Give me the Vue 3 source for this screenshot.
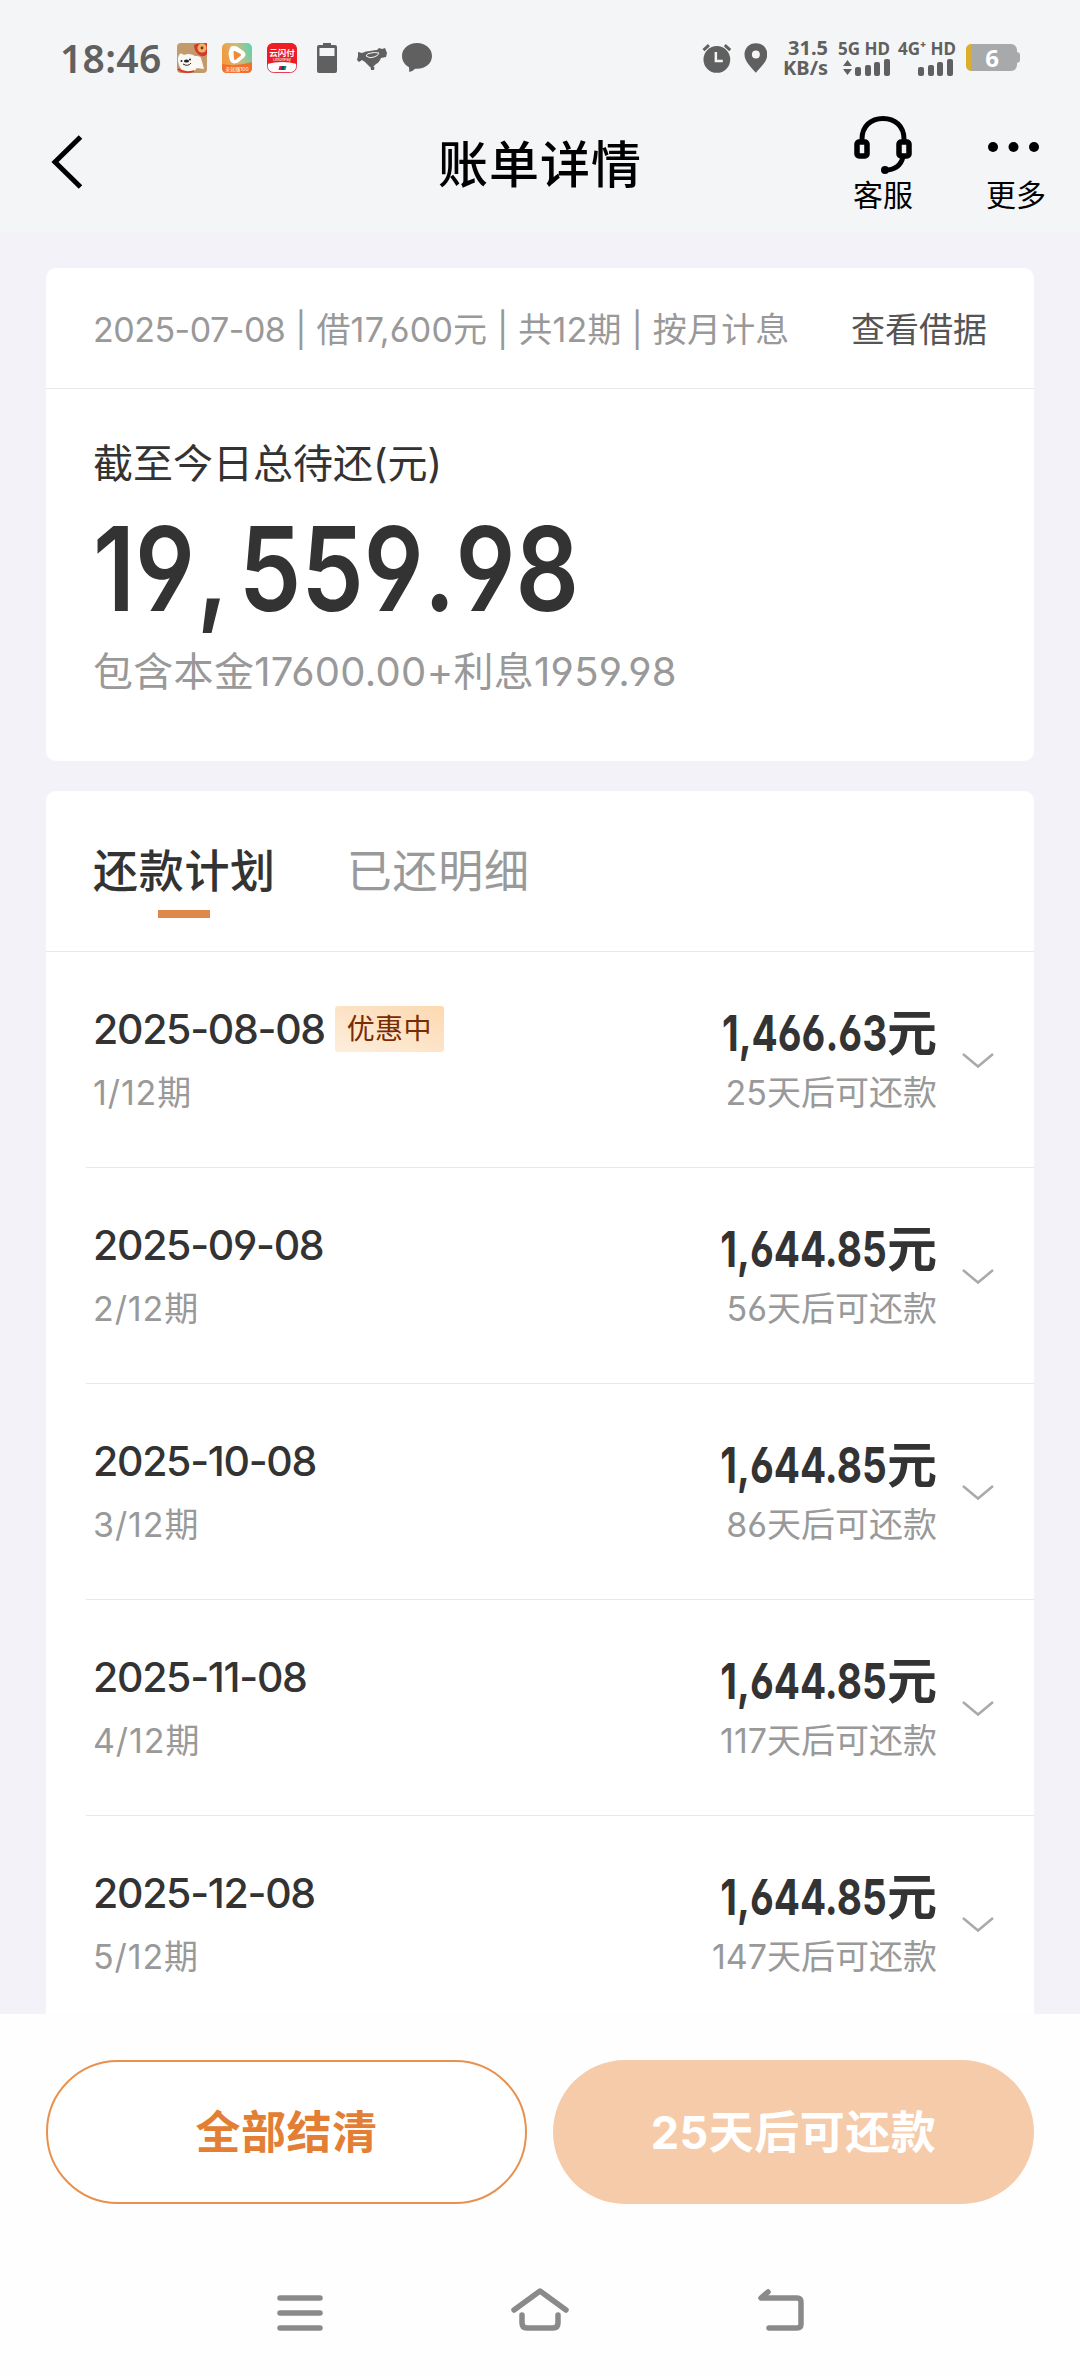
<script setup>
import { ref } from 'vue'

const tabs = ['还款计划', '已还明细']
const activeTab = ref(0)

const plans = [
  { date: '2025-08-08', period: '1/12期', amount: '1,466.63', tip: '25天后可还款', tag: '优惠中' },
  { date: '2025-09-08', period: '2/12期', amount: '1,644.85', tip: '56天后可还款' },
  { date: '2025-10-08', period: '3/12期', amount: '1,644.85', tip: '86天后可还款' },
  { date: '2025-11-08', period: '4/12期', amount: '1,644.85', tip: '117天后可还款' },
  { date: '2025-12-08', period: '5/12期', amount: '1,644.85', tip: '147天后可还款' }
]
</script>

<template>
  <div class="page">
    <header class="top">
      <div class="status-bar">
        <span class="clock">18:46</span>
        <div class="notices">
          <svg width="30" height="30" viewBox="0 0 30 30">
            <rect width="30" height="30" rx="4" fill="#c39a6b" />
            <path d="M17 2q3-2 13-2v11q-3 4-8 1-5-4-5-10z" fill="#d8382c" />
            <circle cx="25" cy="5" r="4.500" fill="#e9b565" />
            <circle cx="25" cy="5" r="1.400" fill="#7c2d17" />
            <path d="M2 12c1-2 3-2 5 0 4-2 8-1 11 1 2 0 5 0 6 2l3 11-7-1c-3 5-13 5-16 1-3-5-4-11-2-14z" fill="#fbf8f3" />
            <path d="M1 26c4 3 10 4 16 2" stroke="#d8382c" stroke-width="1.600" fill="none" />
            <circle cx="4.500" cy="18" r="1" fill="#222" />
            <circle cx="13" cy="16.500" r="1" fill="#222" />
            <ellipse cx="9.500" cy="18" rx="2.600" ry="1.500" fill="#222" />
            <path d="M6 21q5 3 8-1" stroke="#222" fill="none" />
          </svg>
          <svg width="30" height="30" viewBox="0 0 30 30">
            <defs>
              <linearGradient id="play" x1="0" y1="0.300" x2="1" y2="0">
                <stop offset="0" stop-color="#f29a3e" />
                <stop offset="0.450" stop-color="#d5b777" />
                <stop offset="1" stop-color="#4fd6b8" />
              </linearGradient>
            </defs>
            <rect width="30" height="30" rx="5" fill="url(#play)" />
            <path d="M0 21q14 3 30-2v6q0 5-5 5H5q-5 0-5-5z" fill="#f2702e" />
            <path d="M9 3.500q2-1 6 0l7 5q3 3 0 6l-6 5q-6 2.500-8-2-3-9 1-14z" fill="#fff" />
            <path d="M12.500 9l5.500 3-5 4z" fill="#f08a36" stroke="#f08a36" stroke-width="2" stroke-linejoin="round" />
            <text x="15" y="28" text-anchor="middle" class="app-tiny">来就赚100</text>
          </svg>
          <svg width="30" height="30" viewBox="0 0 30 30">
            <rect x="0.500" y="0.500" width="29" height="29" rx="6" fill="#fff" stroke="#e0405a" />
            <path d="M0 7q0-7 7-7h16q7 0 7 7v14q-15-4-30 0z" fill="#ee1c25" />
            <text x="15" y="12.500" text-anchor="middle" class="app-name">云闪付</text>
            <text x="15" y="17.500" text-anchor="middle" class="app-sub">UnionPay</text>
            <path d="M12.500 23h3l-1 4h-3z" fill="#d8222a" />
            <path d="M15 23h3l-1 4h-3z" fill="#17436e" />
            <path d="M17.500 23h2l-1 4h-2z" fill="#0b8a86" />
          </svg>
          <svg width="30" height="30" viewBox="0 0 30 30" fill="#606060">
            <path fill-rule="evenodd" d="M11 0h8v2h4q2 0 2 2v24q0 2-2 2H7q-2 0-2-2V4q0-2 2-2h4zM7.500 5v8h15V5z" />
          </svg>
          <svg width="30" height="30" viewBox="0 0 30 30" fill="#606060">
            <path d="M1 9l4 1q4-2 8-2 5-1 7-1l2-2 3 1 3-1 2 5-1 4-5 1q-2 5-5 6l-3 3h-3l-5-5-3-2-3 2-2-2 1-4z" />
            <path d="M13.500 24h4l-.5 3h-3z" />
            <path d="M9 13q4 3 8 1 4-1 5-4-5-1-8 0-4 0-5 3z" fill="none" stroke="#f4f5f7" stroke-width="1" />
          </svg>
          <svg width="30" height="30" viewBox="0 0 30 30" fill="#606060">
            <path d="M15 0C6.500 0 0 5.600 0 13c0 4.800 2.800 9 7 11.200L7.300 29q3-.6 6-3.300C23 26.500 30 20.600 30 13 30 5.600 23.500 0 15 0z" />
          </svg>
        </div>
        <div class="system">
          <svg width="30" height="30" viewBox="0 0 30 30">
            <circle cx="15" cy="16.500" r="13.500" fill="#606060" />
            <path d="M1.500 7L7 2M28.500 7L23 2" stroke="#606060" stroke-width="3" />
            <path d="M14 9v9h7" stroke="#f4f5f7" stroke-width="2.500" fill="none" />
          </svg>
          <svg class="pin" width="24" height="30" viewBox="0 0 24 30">
            <path fill="#606060" fill-rule="evenodd" d="M12 0C5 0 .5 5 .5 11.500.5 19 8 25 12 30c4-5 11.500-11 11.500-18.500C23.500 5 19 0 12 0zm0 7.500a4 4 0 1 1 0 8 4 4 0 0 1 0-8z" />
          </svg>
          <div class="speed">31.5<br>KB/s</div>
          <div class="signal">
            <span>5G HD</span>
            <svg width="48" height="17" viewBox="0 0 48 17" fill="#606060">
              <path d="M1 7l4.500-6L10 7zM1 10l4.500 6L10 10z" />
              <rect x="13" y="8" width="6" height="9" rx="2" />
              <rect x="23" y="6" width="6" height="11" rx="2" />
              <rect x="32" y="3" width="6" height="14" rx="2" />
              <rect x="42" y="0" width="6" height="17" rx="2" />
            </svg>
          </div>
          <div class="signal second">
            <span>4G⁺ HD</span>
            <svg width="38" height="17" viewBox="0 0 38 17" fill="#606060">
              <rect x="0" y="8" width="6" height="9" rx="2" />
              <rect x="10" y="6" width="6" height="11" rx="2" />
              <rect x="19" y="3" width="6" height="14" rx="2" />
              <rect x="29" y="0" width="6" height="17" rx="2" />
            </svg>
          </div>
          <svg class="battery" width="54" height="28" viewBox="0 0 54 28">
            <rect width="51" height="27" rx="6" fill="#a8a9ab" />
            <path d="M50 8q4 0 4 3v5q0 3-4 3z" fill="#a8a9ab" />
            <path d="M5 0H4.500Q0 1 0 6v15q0 5 4.500 6H5z" fill="#dcae2e" />
            <text x="26" y="22.500" text-anchor="middle" class="battery-num">6</text>
          </svg>
        </div>
      </div>

      <div class="nav-bar">
        <svg class="back" width="34" height="56" viewBox="0 0 34 56">
          <path d="M30.500 3L5 28l25.500 25" fill="none" stroke="#000" stroke-width="5" />
        </svg>
        <h1>账单详情</h1>
        <div class="actions">
          <div class="action">
            <svg width="60" height="60" viewBox="0 0 60 60" fill="none" stroke="#000">
              <path d="M9 25v-2C9 10 18 2.500 30 2.500S51 10 51 23v2" stroke-width="5" />
              <rect x="4" y="26" width="10" height="14" rx="2" stroke-width="5.500" />
              <rect x="46" y="26" width="10" height="14" rx="2" stroke-width="5.500" />
              <path d="M50 41c-2 8-8 13-18 13" stroke-width="5" />
              <circle cx="32" cy="54" r="4" fill="#000" stroke="none" />
            </svg>
            <span>客服</span>
          </div>
          <div class="action">
            <svg width="60" height="60" viewBox="0 0 60 60" fill="#000">
              <circle cx="7" cy="31" r="5" />
              <circle cx="27.500" cy="31" r="5" />
              <circle cx="48" cy="31" r="5" />
            </svg>
            <span>更多</span>
          </div>
        </div>
      </div>
    </header>

    <main class="content">
      <section class="card summary">
        <div class="loan-line">
          <span class="loan-info"><span class="loan-date">2025-07-08</span> | 借17,600元 | 共12期 | 按月计息</span>
          <span class="loan-link">查看借据</span>
        </div>
        <div class="total">
          <div class="total-label">截至今日总待还(元)</div>
          <div class="total-num"><span>19<i>,</i>559.98</span></div>
          <div class="total-desc">包含本金17600.00+利息1959.98</div>
        </div>
      </section>

      <section class="card plan">
        <div class="tabs">
          <div
            v-for="(tab, i) in tabs"
            :key="tab"
            :class="['tab', { active: activeTab === i }]"
            @click="activeTab = i"
          >{{ tab }}</div>
        </div>
        <div v-for="item in plans" :key="item.date" class="row">
          <div class="left">
            <div class="date-line">
              <span class="date">{{ item.date }}</span>
              <span v-if="item.tag" class="tag">{{ item.tag }}</span>
            </div>
            <div class="sub">{{ item.period }}</div>
          </div>
          <div class="right">
            <div class="amount"><span class="num">{{ item.amount }}</span><span>元</span></div>
            <div class="sub tip">{{ item.tip }}</div>
          </div>
          <svg class="arrow" width="32" height="16" viewBox="0 0 32 16">
            <path d="M1 1l15 12.500L31 1" fill="none" stroke="#aaa" stroke-width="2.500" />
          </svg>
        </div>
      </section>
    </main>

    <footer class="footer">
      <div class="buttons">
        <button class="btn outline">全部结清</button>
        <button class="btn solid">25天后可还款</button>
      </div>
      <div class="sys-nav">
        <svg width="60" height="48" viewBox="0 0 60 48" fill="none" stroke="#8a8a8a" stroke-width="5.500" stroke-linecap="round">
          <path d="M10 13h40M10 28h40M10 43h40" />
        </svg>
        <svg width="60" height="48" viewBox="0 0 60 48" fill="none" stroke="#8a8a8a" stroke-width="5.500" stroke-linecap="round" stroke-linejoin="round">
          <path d="M4 25L30 6l26 19" />
          <path d="M12 30v8q0 5 5 5h26q5 0 5-5v-8" />
        </svg>
        <svg width="60" height="48" viewBox="0 0 60 48" fill="none" stroke="#8a8a8a" stroke-width="5.500" stroke-linecap="round" stroke-linejoin="round">
          <path d="M18 7l-7 6h36q4 0 4 4v22q0 4-4 4H19" />
        </svg>
      </div>
    </footer>
  </div>
</template>

<style>
body {
  background: #f3f2f8;
}
</style>

<style scoped>
.page {
  width: 1080px;
  height: 2376px;
  display: flex;
  flex-direction: column;
  overflow: hidden;
  background: #f3f2f8;
  color: #333;
  font-family: Inter, "Noto Sans CJK SC", sans-serif;
  font-feature-settings: "cv03", "cv04", "cv05";
}
.top {
  height: 232px;
  flex: none;
  background: #f4f5f7;
}
.status-bar {
  height: 116px;
  padding: 0 60px;
  display: flex;
  align-items: center;
  color: #606060;
}
.clock {
  width: 117px;
  font: 600 39px/56px "Noto Sans", sans-serif;
  letter-spacing: 0.3px;
}
.notices {
  display: flex;
  gap: 15px;
  flex: 1;
}
.app-tiny {
  font-size: 5px;
  fill: #fff;
}
.app-name {
  font-size: 8.5px;
  font-weight: 700;
  fill: #fff;
}
.app-sub {
  font-size: 4px;
  fill: #fff;
}
.system {
  width: 318px;
  display: flex;
  align-items: center;
}
.pin {
  margin-left: 12px;
}
.speed {
  width: 48px;
  margin-left: 13px;
  margin-right: 1px;
  text-align: right;
  font: 700 20px/20px "Noto Sans", sans-serif;
}
.signal {
  width: 48px;
  margin-left: 13px;
  display: flex;
  flex-direction: column;
  align-items: flex-end;
  gap: 2px;
  font: 700 17px/16px "Noto Sans", sans-serif;
  white-space: nowrap;
}
.signal.second {
  width: 56px;
  margin-left: 10px;
}
.battery {
  margin-left: 10px;
  overflow: visible;
}
.battery-num {
  font: 700 24px "Noto Sans", sans-serif;
  fill: #fff;
}
.nav-bar {
  height: 116px;
  padding: 0 34px 0 50px;
  display: grid;
  grid-template-columns: 200px 1fr 200px;
  color: #000;
}
.back {
  margin-top: 18px;
}
h1 {
  margin: 12px 0 0;
  text-align: center;
  font-size: 50px;
  font-weight: 500;
  line-height: 74px;
  letter-spacing: 1px;
  padding-right: 16px;
}
.actions {
  display: flex;
  justify-content: flex-end;
  gap: 73px;
}
.action {
  display: flex;
  flex-direction: column;
  align-items: center;
  font-size: 30px;
  line-height: 40px;
  white-space: nowrap;
}
.action svg {
  overflow: visible;
}
.action span {
  margin-top: -1px;
}
.content {
  height: 1782px;
  box-sizing: border-box;
  flex: none;
  padding: 36px 46px 0;
  overflow: hidden;
}
.card {
  background: #fff;
  border-radius: 10px;
}
.summary {
  height: 493px;
  margin-bottom: 30px;
}
.loan-line {
  height: 121px;
  box-sizing: border-box;
  padding: 4px 47px 0;
  display: flex;
  align-items: center;
  justify-content: space-between;
  border-bottom: 1px solid #e8e8e8;
  font-size: 34px;
  line-height: 60px;
  white-space: nowrap;
}
.loan-info {
  color: #999;
  letter-spacing: 0.2px;
}
.loan-date {
  letter-spacing: -0.5px;
}
.loan-link {
  color: #555;
}
.total {
  padding: 45px 47px 0;
}
.total-label {
  font-size: 40px;
  line-height: 60px;
}
.total-num {
  height: 120px;
  margin-top: 15px;
  line-height: 120px;
  font-size: 117px;
  font-weight: 600;
  font-kerning: none;
}
.total-num span {
  display: inline-block;
  transform: scaleX(0.85);
  transform-origin: left;
}
.total-num i {
  margin: 0 12px 0 2px;
  font-style: normal;
}
.total-desc {
  margin-top: 13px;
  font-size: 40px;
  line-height: 60px;
  color: #999;
  letter-spacing: 0.3px;
}
.tabs {
  height: 160px;
  padding: 0 47px;
  display: flex;
  gap: 71px;
  border-bottom: 1px solid #e8e8e8;
  font-size: 45px;
  letter-spacing: 0.7px;
}
.tab {
  display: flex;
  flex-direction: column;
  align-items: center;
  padding-top: 51px;
  line-height: 60px;
  color: #999;
}
.tab.active {
  color: #333;
  font-weight: 500;
}
.tab.active::after {
  content: "";
  width: 52px;
  height: 8px;
  margin-top: 8px;
  background: #e0874a;
}
.row {
  height: 215px;
  margin-left: 40px;
  padding-left: 7px;
  display: flex;
  border-bottom: 1px solid #e8e8e8;
}
.left {
  flex: 1;
  padding-top: 47px;
}
.date-line {
  height: 60px;
  display: flex;
  align-items: center;
  gap: 10px;
  font-size: 41px;
}
.date {
  font-weight: 500;
  letter-spacing: -1.3px;
}
.tag {
  padding: 0 12px;
  border-radius: 3px;
  font-size: 28px;
  line-height: 46px;
  letter-spacing: 0.3px;
  color: #7a2b00;
  background: linear-gradient(20deg, #fdeedd, #fcd9b0);
}
.sub {
  margin-top: 9px;
  font-size: 34px;
  line-height: 50px;
  color: #999;
}
.left .sub {
  letter-spacing: 0.9px;
}
.right {
  width: 300px;
  padding-top: 51px;
  text-align: right;
}
.amount {
  height: 60px;
  display: flex;
  justify-content: flex-end;
  line-height: 60px;
  font-size: 50px;
  font-weight: 700;
}
.amount .num {
  transform: scaleX(0.775);
  transform-origin: right;
}
.right .tip {
  margin-top: 5px;
}
.arrow {
  margin: 101px 40px 0 25px;
}
.footer {
  flex: 1;
  background: #fefefe;
}
.buttons {
  padding: 46px 46px 0;
  display: grid;
  grid-template-columns: 1fr 1fr;
  gap: 26px;
}
.btn {
  height: 144px;
  padding: 0 0 5px;
  border: 0;
  border-radius: 72px;
  font-family: inherit;
  font-size: 45px;
  font-weight: 700;
  letter-spacing: 0.5px;
}
.outline {
  border: 2px solid #e8914f;
  background: #fff;
  color: #e37e35;
}
.solid {
  background: #f6cbaa;
  color: #fff;
}
.sys-nav {
  margin-top: 81px;
  padding: 0 270px;
  display: flex;
  justify-content: space-between;
}
</style>
